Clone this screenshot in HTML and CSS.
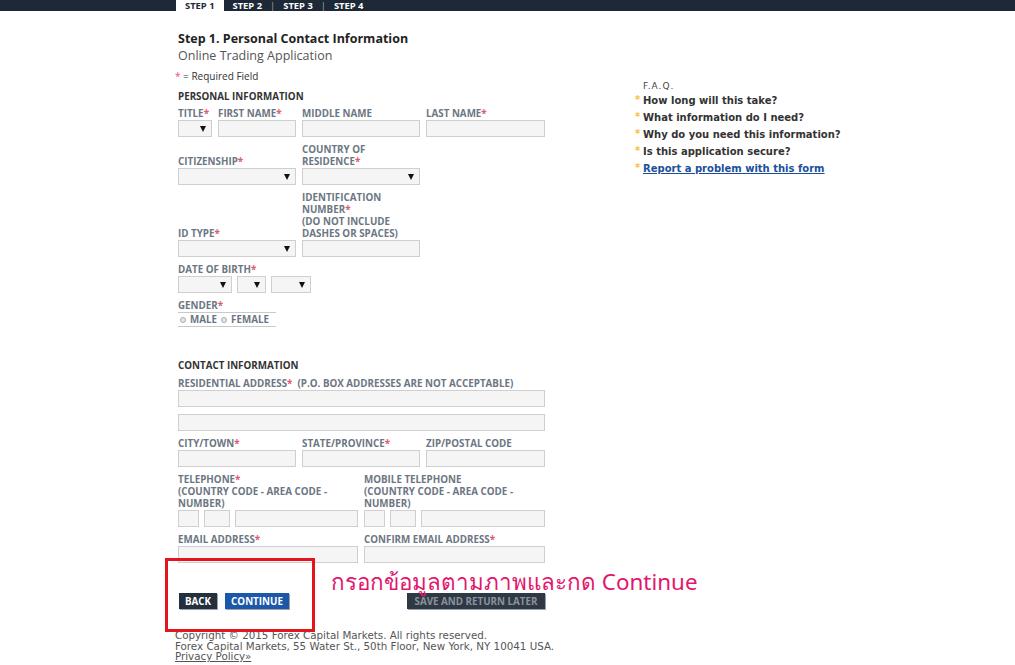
FILE: index.html
```
<!DOCTYPE html>
<html lang="en">
<head>
    <meta charset="UTF-8">
    <meta name="viewport" content="width=device-width, initial-scale=1.0">
    <title>Online Trading Application - Step 1</title>
    <link rel="stylesheet" href="styles.css">
</head>
<body>
    <div class="steps-bar">
        <div class="steps">
            <span class="step active">STEP 1</span>
            <span class="step">STEP 2</span><span class="sep">|</span>
            <span class="step">STEP 3</span><span class="sep">|</span>
            <span class="step">STEP 4</span>
        </div>
    </div>

    <div class="page">
        <div class="form-col">
            <h1>Step 1. Personal Contact Information</h1>
            <h2>Online Trading Application</h2>
            <p class="required-note"><span class="req">*</span> = Required Field</p>

            <h3>PERSONAL INFORMATION</h3>

            <div class="row row-name">
                <div class="field">
                    <label>TITLE<span class="req">*</span></label>
                    <span class="select"></span>
                </div>
                <div class="field">
                    <label>FIRST NAME<span class="req">*</span></label>
                    <input type="text">
                </div>
                <div class="field">
                    <label>MIDDLE NAME</label>
                    <input type="text">
                </div>
                <div class="field">
                    <label>LAST NAME<span class="req">*</span></label>
                    <input type="text">
                </div>
            </div>

            <div class="row row-3">
                <div class="field">
                    <label>CITIZENSHIP<span class="req">*</span></label>
                    <span class="select"></span>
                </div>
                <div class="field">
                    <label>COUNTRY OF<br>RESIDENCE<span class="req">*</span></label>
                    <span class="select"></span>
                </div>
            </div>

            <div class="row row-3">
                <div class="field">
                    <label>ID TYPE<span class="req">*</span></label>
                    <span class="select"></span>
                </div>
                <div class="field">
                    <label>IDENTIFICATION<br>NUMBER<span class="req">*</span><br>(DO NOT INCLUDE<br>DASHES OR SPACES)</label>
                    <input type="text">
                </div>
            </div>

            <div class="field">
                <label>DATE OF BIRTH<span class="req">*</span></label>
                <div class="dob">
                    <span class="select dob-month"></span>
                    <span class="select dob-day"></span>
                    <span class="select dob-year"></span>
                </div>
            </div>

            <div class="field gender">
                <label>GENDER<span class="req">*</span></label>
                <div class="radios">
                    <span class="radio"></span> MALE
                    <span class="radio"></span> FEMALE
                </div>
            </div>

            <h3 class="contact-title">CONTACT INFORMATION</h3>

            <div class="field">
                <label>RESIDENTIAL ADDRESS<span class="req">*</span>&nbsp; (P.O. BOX ADDRESSES ARE NOT ACCEPTABLE)</label>
                <input type="text" class="wide">
                <input type="text" class="wide second">
            </div>

            <div class="row row-3">
                <div class="field">
                    <label>CITY/TOWN<span class="req">*</span></label>
                    <input type="text">
                </div>
                <div class="field">
                    <label>STATE/PROVINCE<span class="req">*</span></label>
                    <input type="text">
                </div>
                <div class="field">
                    <label>ZIP/POSTAL CODE</label>
                    <input type="text">
                </div>
            </div>

            <div class="row row-2">
                <div class="field">
                    <label>TELEPHONE<span class="req">*</span><br>(COUNTRY CODE - AREA CODE -<br>NUMBER)</label>
                    <div class="phone">
                        <input type="text" class="cc">
                        <input type="text" class="ac">
                        <input type="text" class="num">
                    </div>
                </div>
                <div class="field">
                    <label>MOBILE TELEPHONE<br>(COUNTRY CODE - AREA CODE -<br>NUMBER)</label>
                    <div class="phone">
                        <input type="text" class="cc">
                        <input type="text" class="ac">
                        <input type="text" class="num">
                    </div>
                </div>
            </div>

            <div class="row row-2">
                <div class="field">
                    <label>EMAIL ADDRESS<span class="req">*</span></label>
                    <input type="text">
                </div>
                <div class="field">
                    <label>CONFIRM EMAIL ADDRESS<span class="req">*</span></label>
                    <input type="text">
                </div>
            </div>

            <div class="buttons">
                <div class="nav-buttons">
                    <button class="btn btn-back">BACK</button>
                    <button class="btn btn-continue">CONTINUE</button>
                </div>
                <button class="btn btn-save">SAVE AND RETURN LATER</button>
            </div>

            <div class="footer">
                <p>Copyright &copy; 2015 Forex Capital Markets. All rights reserved.</p>
                <p>Forex Capital Markets, 55 Water St., 50th Floor, New York, NY 10041 USA.</p>
                <p><a href="#">Privacy Policy&raquo;</a></p>
            </div>

            <!-- tutorial annotation drawn over the screenshot -->
            <div class="highlight-box"></div>
            <div class="annotation">กรอกข้อมูลตามภาพและกด Continue</div>
        </div>

        <div class="faq">
            <p class="faq-title">F.A.Q.</p>
            <ul>
                <li>How long will this take?</li>
                <li>What information do I need?</li>
                <li>Why do you need this information?</li>
                <li>Is this application secure?</li>
                <li><a href="#">Report a problem with this form</a></li>
            </ul>
        </div>
    </div>
</body>
</html>
```

FILE: styles.css
```
body {
    margin: 0;
    padding: 0;
    background-color: #ffffff;
    font-family: 'Open Sans', sans-serif;
    color: #333;
}

/* Top steps bar */
.steps-bar {
    height: 11px;
    background-color: #1d2937;
}

.steps {
    width: 663px;
    margin: 0 auto;
    display: flex;
    align-items: center;
    height: 11px;
    font-size: 9.4px;
    font-weight: bold;
    color: #ffffff;
}

.step {
    line-height: 11px;
}

.step.active {
    background-color: #ffffff;
    color: #1d2937;
    padding: 0 9px;
    margin-right: 9px;
}

.sep {
    color: #9aa4b0;
    font-weight: normal;
    padding: 0 8px;
}

/* Page layout */
.page {
    width: 663px;
    margin: 0 auto;
    padding-left: 2px;
    display: flex;
    box-sizing: border-box;
}

.form-col {
    width: 367px;
    position: relative;
}

h1 {
    font-size: 12.5px;
    font-weight: bold;
    color: #222;
    margin: 21px 0 0;
    line-height: 14px;
}

h2 {
    font-size: 12.5px;
    font-weight: normal;
    color: #555;
    margin: 3px 0 0;
    line-height: 14px;
}

.required-note {
    font-size: 10px;
    color: #333;
    margin: 7px 0 0 -3px;
    line-height: 12px;
}

.req {
    color: #e0596a;
}

h3 {
    font-size: 9.8px;
    font-weight: bold;
    color: #333;
    margin: 9px 0 0;
    line-height: 12px;
}

/* Form fields */
.row {
    display: grid;
    column-gap: 6px;
    align-items: end;
}

.row-name {
    grid-template-columns: 34px 78px 118px 119px;
    margin-top: 5px;
}

.row-3 {
    grid-template-columns: 118px 118px 119px;
}

.row-2 {
    grid-template-columns: 180px 181px;
}

.field {
    display: flex;
    flex-direction: column;
    margin-bottom: 7px;
}

label {
    font-size: 9.8px;
    font-weight: bold;
    color: #6c7683;
    line-height: 12px;
    white-space: nowrap;
}

input {
    box-sizing: border-box;
    height: 17px;
    width: 100%;
    margin: 0;
    border: 1px solid #cfcfcf;
    background-color: #f5f5f5;
    padding: 0 3px;
}

input.second {
    margin-top: 7px;
}

.select {
    display: block;
    box-sizing: border-box;
    height: 17px;
    width: 100%;
    border: 1px solid #cfcfcf;
    background-color: #f5f5f5;
    position: relative;
}

.select::after {
    content: "";
    position: absolute;
    right: 5px;
    top: 5px;
    border-left: 3px solid transparent;
    border-right: 3px solid transparent;
    border-top: 6px solid #111;
}

.dob {
    display: flex;
    gap: 5px;
}

.dob .dob-month {
    width: 54px;
}

.dob .dob-day {
    width: 29px;
}

.dob .dob-year {
    width: 40px;
}

.gender label {
    border-bottom: 1px solid #c9c9c9;
    width: 98px;
}

.radios {
    width: 98px;
    border-bottom: 1px solid #c9c9c9;
    font-size: 9.8px;
    font-weight: bold;
    color: #6c7683;
    line-height: 13px;
    display: flex;
    align-items: center;
    gap: 4px;
    padding-left: 2px;
    box-sizing: border-box;
}

.radio {
    display: inline-block;
    width: 4px;
    height: 4px;
    border-radius: 50%;
    border: 1px solid #a5abb3;
    background-color: #e6e6e6;
}

.contact-title {
    margin-top: 33px;
    margin-bottom: 6px;
}

.phone {
    display: flex;
    gap: 5px;
}

.phone .cc {
    width: 21px;
}

.phone .ac {
    width: 26px;
}

.phone .num {
    flex: 1;
}

/* Buttons */
.buttons {
    display: flex;
    justify-content: space-between;
    align-items: center;
    margin-top: 23px;
    padding-left: 1px;
}

.nav-buttons {
    display: flex;
    gap: 8px;
}

.btn {
    border: none;
    height: 16px;
    padding: 0;
    font-family: 'Open Sans', sans-serif;
    font-size: 9.8px;
    font-weight: bold;
    color: #ffffff;
    box-shadow: 1px 1px 0 #9aa3ad;
    cursor: pointer;
}

.btn-back {
    background-color: #25303d;
    width: 38px;
}

.btn-continue {
    background-color: #1b58a9;
    width: 64px;
}

.btn-save {
    background-color: #2f3945;
    color: #8b929b;
    width: 138px;
}

/* Footer */
.footer {
    margin: 21px 0 0 -3px;
    font-family: 'DejaVu Sans', Verdana, sans-serif;
    font-size: 10.3px;
    color: #555;
    line-height: 10.5px;
    white-space: nowrap;
}

.footer p {
    margin: 0;
}

.footer a {
    color: #555;
}

/* Annotation overlay */
.highlight-box {
    position: absolute;
    left: -13px;
    top: 547px;
    box-sizing: border-box;
    width: 150px;
    height: 74px;
    border: 3px solid #e3161d;
}

.annotation {
    position: absolute;
    left: 153px;
    top: 556px;
    white-space: nowrap;
    font-family: 'Noto Sans', 'DejaVu Sans', sans-serif;
    font-size: 22.4px;
    color: #e3166e;
    line-height: 30px;
}

/* FAQ sidebar */
.faq {
    margin-left: 90px;
    padding-top: 69px;
    font-family: 'DejaVu Sans', Verdana, sans-serif;
}

.faq-title {
    font-size: 9px;
    color: #444;
    margin: 0 0 0 8px;
    letter-spacing: 1px;
    line-height: 12px;
}

.faq ul {
    list-style: none;
    margin: 0;
    padding: 0;
}

.faq li {
    font-size: 10px;
    font-weight: bold;
    color: #333;
    line-height: 17px;
    padding-left: 8px;
    position: relative;
    white-space: nowrap;
}

.faq li::before {
    content: "*";
    position: absolute;
    left: 0;
    top: -1px;
    color: #f2c232;
}

.faq a {
    color: #1c4f9a;
}
```
